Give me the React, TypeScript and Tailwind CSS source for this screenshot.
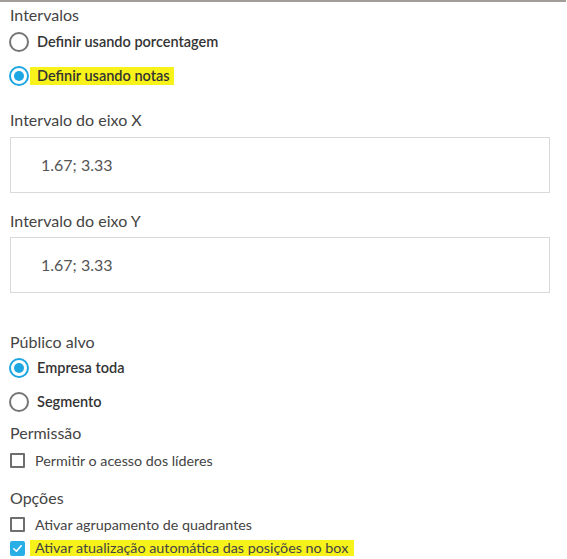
import React from "react";

const font = { fontFamily: "Lato, 'Noto Sans', sans-serif" };

function Radio({ checked, label, highlight }: { checked?: boolean; label: string; highlight?: boolean }) {
  return (
    <div className="flex items-center h-[20px]">
      <span
        className={`w-[20px] h-[20px] rounded-full border-2 flex items-center justify-center shrink-0 ${
          checked ? "border-[#1ca7e3]" : "border-[#757575]"
        }`}
      >
        {checked && <span className="w-[10px] h-[10px] rounded-full bg-[#1ca7e3]" />}
      </span>
      {highlight ? (
        <span className="ml-[1px] pl-[7px] pr-[4px] bg-[#f7f21a] text-[14.5px] font-semibold text-[#333] leading-[18px]">
          {label}
        </span>
      ) : (
        <span className="ml-[8px] text-[14.5px] font-semibold text-[#333] leading-[18px]">{label}</span>
      )}
    </div>
  );
}

function Check({ checked, label, highlight }: { checked?: boolean; label: string; highlight?: boolean }) {
  return (
    <div className="flex items-center h-[16px]">
      {checked ? (
        <span className="w-[15px] h-[15px] rounded-[2px] bg-[#2aaee6] flex items-center justify-center shrink-0">
          <svg width="11" height="11" viewBox="0 0 12 12">
            <path d="M2 6.3 L4.8 9 L10 3" fill="none" stroke="white" strokeWidth="1.8" strokeLinecap="round" strokeLinejoin="round" />
          </svg>
        </span>
      ) : (
        <span className="w-[15px] h-[15px] border-2 border-[#6f6f6f] rounded-[1px] shrink-0" />
      )}
      {highlight ? (
        <span className="ml-[5px] pl-[5px] pr-[6px] bg-[#f7f21a] text-[14.3px] text-[#444] leading-[16px]">{label}</span>
      ) : (
        <span className="ml-[10px] text-[14.3px] text-[#444] leading-[17px]">{label}</span>
      )}
    </div>
  );
}

function Label({ children, className = "" }: { children: React.ReactNode; className?: string }) {
  return <div className={`text-[16px] text-[#444] leading-[18px] ${className}`}>{children}</div>;
}

function Field({ value }: { value: string }) {
  return (
    <div className="h-[56px] w-[540px] border border-[#d9d9d9] bg-white flex items-center pl-[30px] text-[16px] text-[#555]">
      {value}
    </div>
  );
}

export default function App() {
  return (
    <div className="w-[567px] h-[559px] bg-white overflow-hidden" style={font}>
      <div className="h-[2px] w-[566px] bg-[#a39d97]" />
      <div className="pl-[10px]">
        <Label className="mt-[4px]">Intervalos</Label>
        <div className="mt-[8px] -ml-[1px]">
          <Radio label="Definir usando porcentagem" />
        </div>
        <div className="mt-[14px] -ml-[1px]">
          <Radio checked highlight label="Definir usando notas" />
        </div>
        <Label className="mt-[25px]">Intervalo do eixo X</Label>
        <div className="mt-[8px]">
          <Field value="1.67; 3.33" />
        </div>
        <Label className="mt-[19px]">Intervalo do eixo Y</Label>
        <div className="mt-[7px]">
          <Field value="1.67; 3.33" />
        </div>
        <Label className="mt-[40px]">Público alvo</Label>
        <div className="mt-[7px] -ml-[1px]">
          <Radio checked label="Empresa toda" />
        </div>
        <div className="mt-[14px] -ml-[1px]">
          <Radio label="Segmento" />
        </div>
        <Label className="mt-[12px]">Permissão</Label>
        <div className="mt-[10px]">
          <Check label="Permitir o acesso dos líderes" />
        </div>
        <Label className="mt-[21px]">Opções</Label>
        <div className="mt-[9px]">
          <Check label="Ativar agrupamento de quadrantes" />
        </div>
        <div className="mt-[8px]">
          <Check checked highlight label="Ativar atualização automática das posições no box" />
        </div>
      </div>
    </div>
  );
}
